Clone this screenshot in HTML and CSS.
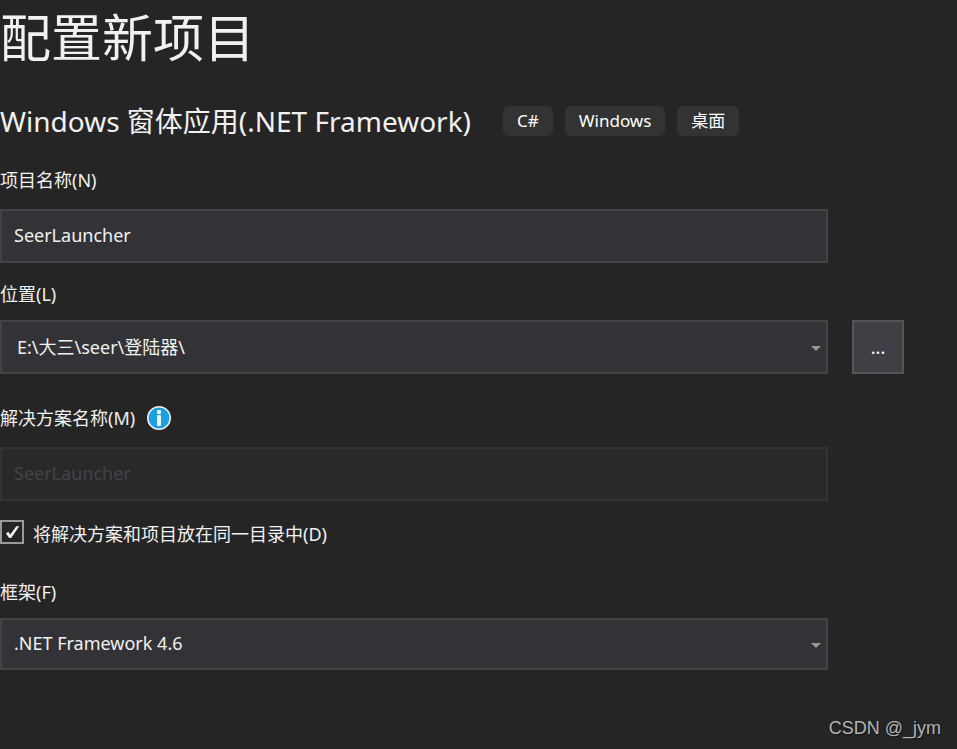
FILE: index.html
```html
<!DOCTYPE html>
<html lang="zh-CN">
<head>
  <meta charset="utf-8">
  <title>配置新项目</title>
  <link rel="stylesheet" href="styles.css">
</head>
<body>
  <main>
    <h1>配置新项目</h1>
    <div class="template">
      <h2>Windows 窗体应用(.NET Framework)</h2>
      <ul class="tags">
        <li>C#</li>
        <li>Windows</li>
        <li>桌面</li>
      </ul>
    </div>
    <form>
      <div class="field name">
        <label for="project-name">项目名称(N)</label>
        <input id="project-name" class="box" type="text" value="SeerLauncher">
      </div>
      <div class="field">
        <label for="location">位置(L)</label>
        <div class="select location">
          <select id="location" class="box">
            <option>E:\大三\seer\登陆器\</option>
          </select>
        </div>
        <button class="browse" type="button">...</button>
      </div>
      <div class="field name solution">
        <div class="label-row">
          <label for="solution-name">解决方案名称(M)</label>
          <svg class="info" width="24" height="24" viewBox="0 0 24 24">
            <circle cx="12" cy="12" r="11.25" fill="#1ba1e2" stroke="#f1f1f1" stroke-width="1.5"/>
            <rect x="10" y="4" width="4" height="4" rx="1" fill="#f1f1f1"/>
            <rect x="10" y="9" width="4" height="11" rx="1" fill="#f1f1f1"/>
          </svg>
        </div>
        <input id="solution-name" class="box" type="text" value="SeerLauncher" disabled>
      </div>
      <div class="check">
        <span class="tick">
          <input id="same-dir" type="checkbox" checked>
          <svg width="24" height="24" viewBox="0 0 24 24">
            <path d="M6 13.5L8.2 11.8L10.3 14.6L16.3 6.2H19.2L11.2 18H9.2Z" fill="#f1f1f1"/>
          </svg>
        </span>
        <label for="same-dir">将解决方案和项目放在同一目录中(D)</label>
      </div>
      <div class="field framework">
        <label for="framework">框架(F)</label>
        <div class="select">
          <select id="framework" class="box">
            <option>.NET Framework 4.6</option>
          </select>
        </div>
      </div>
    </form>
  </main>
  <footer>CSDN @_jym</footer>
</body>
</html>
```

FILE: styles.css
```css
* {
  box-sizing: border-box;
}
body {
  margin: 0;
  background-color: #252526;
  color: #f1f1f1;
  font-family: "Noto Sans", "Noto Sans CJK SC", sans-serif;
  font-size: 18px;
  line-height: 24px;
}
main {
  padding-right: 53px;
}
h1 {
  margin: 0 0 29px;
  font-size: 51px;
  line-height: 74px;
  font-weight: 400;
}
h2 {
  margin: 0;
  font-size: 28px;
  line-height: 36px;
  font-weight: 400;
}
.template {
  display: flex;
  align-items: center;
  gap: 32px;
  margin-bottom: 29px;
}
.tags {
  display: flex;
  gap: 12px;
  margin: 0;
  padding: 0;
  list-style: none;
}
.tags li {
  padding: 3px 14px;
  border-radius: 6px;
  background-color: #333334;
  color: #fff;
  font-size: 17px;
}
.field {
  display: grid;
  grid-template-columns: 1fr 52px;
  column-gap: 24px;
  row-gap: 14px;
  margin-bottom: 19px;
}
.name {
  row-gap: 17px;
}
.field > label,
.label-row {
  grid-column: 1 / -1;
}
.label-row {
  display: flex;
  gap: 12px;
}
.box {
  width: 100%;
  height: 54px;
  margin: 0;
  padding: 0 12px 2px;
  border: 2px solid #434346;
  border-radius: 0;
  background-color: #333337;
  color: #f1f1f1;
  font: inherit;
  appearance: none;
}
.box:disabled {
  border-color: #333337;
  background-color: #29292b;
  color: #434346;
}
.select {
  position: relative;
}
.select::after {
  content: "";
  position: absolute;
  top: 50%;
  right: 7px;
  border: 5px solid transparent;
  border-top-color: #999;
  border-bottom: 0;
  margin-top: -1px;
}
.location .box {
  padding: 0 15px;
}
.browse {
  height: 54px;
  padding: 0;
  border: 2px solid #555;
  background-color: #3f3f46;
  color: #fff;
  font: inherit;
}
.solution {
  margin-top: 32px;
}
.check {
  display: flex;
  gap: 9px;
}
.check label {
  padding-top: 2px;
}
.tick {
  position: relative;
  height: 24px;
}
.tick input {
  display: block;
  width: 24px;
  height: 24px;
  margin: 0;
  border: 2px solid #999;
  background-color: #252526;
  appearance: none;
}
.tick svg {
  position: absolute;
  top: 0;
  left: 0;
  visibility: hidden;
  pointer-events: none;
}
.tick input:checked + svg {
  visibility: visible;
}
.framework {
  margin-top: 34px;
}
.framework .box {
  height: 52px;
}
footer {
  margin-top: 46px;
  padding-right: 16px;
  color: #b4b4b4;
  font-family: "Liberation Sans", sans-serif;
  text-align: right;
  text-shadow: 1px 1px 1px #111;
}
```
